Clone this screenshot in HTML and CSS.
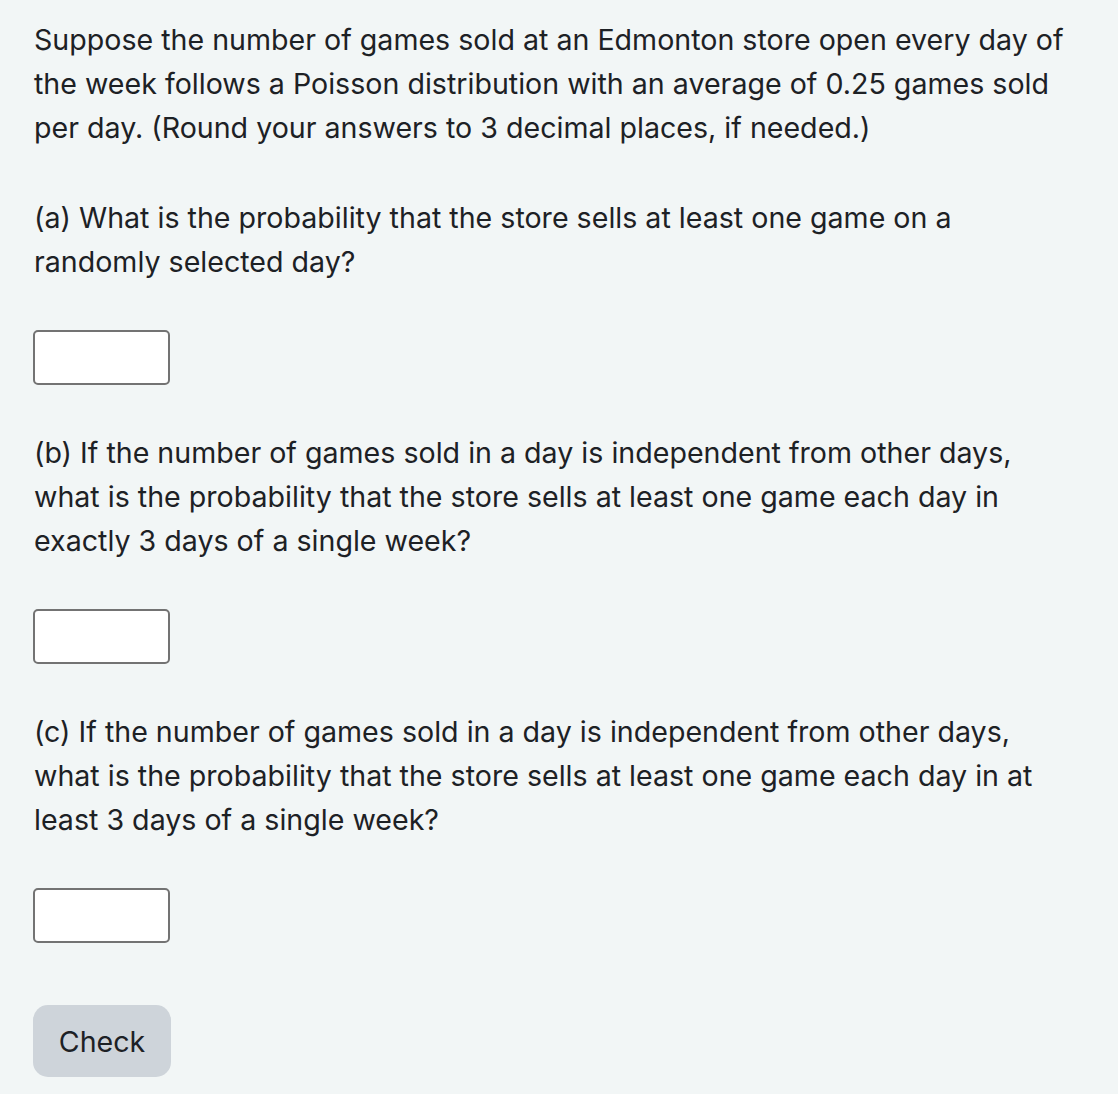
FILE: index.html
```html
<!DOCTYPE html>
<html>
<head>
<meta charset="utf-8">
<link rel="stylesheet" href="styles.css">
</head>
<body>
<div class="question">
  <p class="text">Suppose the number of games sold at an Edmonton store open every day of<br>the week follows a Poisson distribution with an average of 0.25 games sold<br>per day. (Round your answers to 3 decimal places, if needed.)</p>
  <p class="text">(a) What is the probability that the store sells at least one game on a<br>randomly selected day?</p>
  <div class="answer"><input class="box" type="text"></div>
  <p class="text">(b) If the number of games sold in a day is independent from other days,<br>what is the probability that the store sells at least one game each day in<br>exactly 3 days of a single week?</p>
  <div class="answer"><input class="box" type="text"></div>
  <p class="text">(c) If the number of games sold in a day is independent from other days,<br>what is the probability that the store sells at least one game each day in at<br>least 3 days of a single week?</p>
  <div class="answer"><input class="box" type="text"></div>
  <div class="actions"><button class="check" type="button">Check</button></div>
</div>
</body>
</html>
```

FILE: styles.css
```css
html, body {
  margin: 0;
  padding: 0;
  background: #f2f6f6;
}
body {
  font-family: Inter, "Noto Sans", sans-serif;
  color: #1d2125;
}
.question {
  padding: 18px 0 0 34px;
  display: flex;
  flex-direction: column;
  gap: 46px;
}
.text {
  margin: 0;
  font-size: 28.6px;
  line-height: 44px;
  white-space: nowrap;
}
.answer {
  display: flex;
  margin-left: -1px;
}
.box {
  width: 137px;
  height: 55px;
  box-sizing: border-box;
  border: 2px solid #737373;
  border-radius: 5px;
  background: #fff;
  margin: 0;
}
.actions {
  margin-top: 16px;
  display: flex;
  margin-left: -1px;
}
.check {
  width: 138px;
  height: 72px;
  border: none;
  border-radius: 15px;
  background: #ced4da;
  color: #1d2125;
  font-family: Inter, "Noto Sans", sans-serif;
  font-size: 28.6px;
  padding: 0;
}
```
